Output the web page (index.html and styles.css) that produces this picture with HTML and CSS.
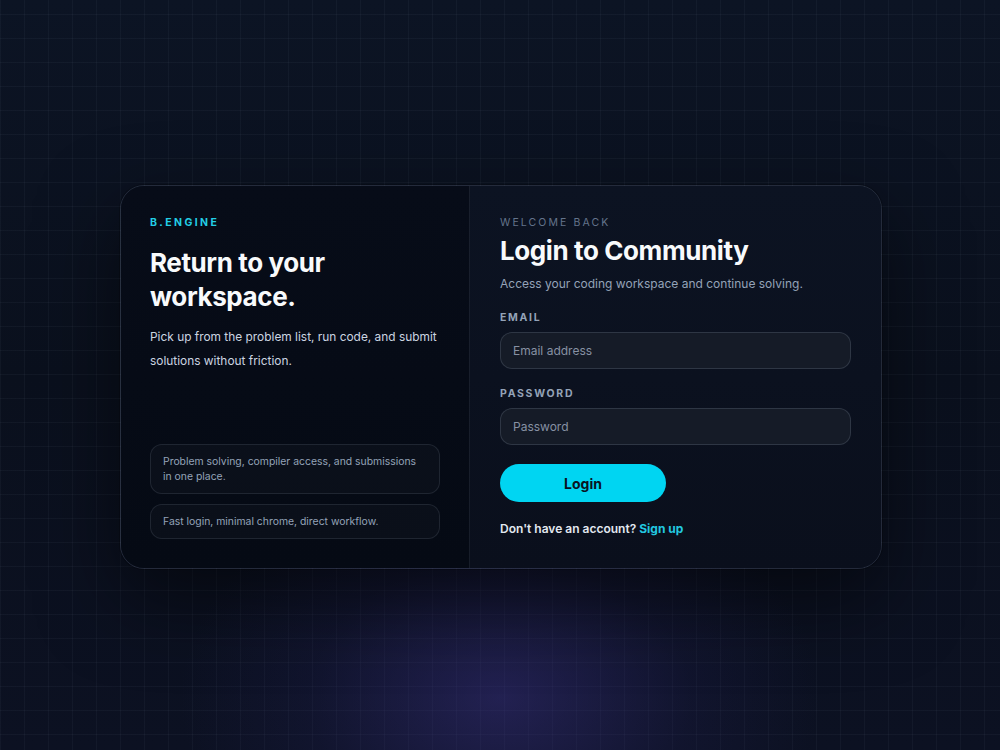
FILE: index.html
```html
<!DOCTYPE html>
<html lang="en">
<head>
<meta charset="utf-8">
<title>Login to Community · B.ENGINE</title>
<link rel="stylesheet" href="styles.css">
</head>
<body>
<main class="auth-card">
  <section class="intro">
    <div class="brand">B.ENGINE</div>
    <h1 class="intro-title">Return to your workspace.</h1>
    <p class="intro-text">Pick up from the problem list, run code, and submit solutions without friction.</p>
    <ul class="features">
      <li class="feature">Problem solving, compiler access, and submissions in one place.</li>
      <li class="feature">Fast login, minimal chrome, direct workflow.</li>
    </ul>
  </section>
  <section class="form-side">
    <div class="eyebrow">WELCOME BACK</div>
    <h2 class="form-title">Login to Community</h2>
    <p class="form-sub">Access your coding workspace and continue solving.</p>
    <form class="login-form">
      <label class="field-label" for="email">EMAIL</label>
      <input class="field-input" id="email" type="email" placeholder="Email address">
      <label class="field-label field-gap" for="password">PASSWORD</label>
      <input class="field-input" id="password" type="password" placeholder="Password">
      <button class="login-btn" type="button">Login</button>
    </form>
    <p class="signup">Don't have an account? <a href="#" class="signup-link">Sign up</a></p>
  </section>
</main>
</body>
</html>
```
FILE: styles.css
```css
* {
  box-sizing: border-box;
}

html, body {
  margin: 0;
  height: 100%;
}

body {
  padding: 4px 0 0 2px;
  font-family: Inter, "Noto Sans", sans-serif;
  color: #f1f5f9;
  background-color: #0a111f;
  background-image:
    radial-gradient(ellipse 320px 230px at 50% 93%, rgba(62, 52, 140, 0.45), rgba(40, 36, 100, 0.18) 60%, transparent 100%),
    linear-gradient(rgba(148, 163, 184, 0.055) 1px, transparent 1px),
    linear-gradient(90deg, rgba(148, 163, 184, 0.055) 1px, transparent 1px),
    linear-gradient(180deg, #0c1424 0%, #0a101d 50%, #0c1122 100%);
  background-size: 100% 100%, 24px 24px, 24px 24px, 100% 100%;
  background-position: 0 0, 0 14px, 0 0, 0 0;
  display: flex;
  align-items: center;
  justify-content: center;
}

.auth-card {
  width: 762px;
  height: 384px;
  display: grid;
  grid-template-columns: 349px 1fr;
  border: 1px solid rgba(148, 163, 184, 0.18);
  border-radius: 24px;
  overflow: hidden;
  box-shadow: 0 30px 80px rgba(0, 0, 0, 0.5), 0 0 0 1px rgba(0, 0, 0, 0.2);
}

/* left column */
.intro {
  background: linear-gradient(180deg, #070c18 0%, #050a14 100%);
  border-right: 1px solid rgba(148, 163, 184, 0.13);
  padding: 30px 29px 29px 29px;
  display: flex;
  flex-direction: column;
}

.brand {
  font-size: 10.5px;
  line-height: 14px;
  font-weight: 700;
  letter-spacing: 2.4px;
  color: #22cfe6;
}

.intro-title {
  margin: 16px 0 0;
  font-size: 26px;
  line-height: 34px;
  font-weight: 700;
  letter-spacing: -0.4px;
  color: #f8fafc;
}

.intro-text {
  margin: 11px 0 0;
  font-size: 11.9px;
  line-height: 24px;
  color: #cbd5e1;
}

.features {
  list-style: none;
  margin: auto 0 0;
  padding: 0;
  display: flex;
  flex-direction: column;
  gap: 10px;
}

.feature {
  padding: 9px 18px 9px 12px;
  font-size: 10.4px;
  line-height: 15px;
  color: #94a3b8;
  border: 1px solid rgba(148, 163, 184, 0.15);
  border-radius: 12px;
  background: rgba(255, 255, 255, 0.025);
}

/* right column */
.form-side {
  background: linear-gradient(180deg, #0c1322 0%, #0a0f1c 100%);
  padding: 30px 30px 29px 30px;
  display: flex;
  flex-direction: column;
}

.eyebrow {
  font-size: 10.5px;
  line-height: 14px;
  letter-spacing: 2.1px;
  color: #64748b;
}

.form-title {
  margin: 4px 0 0;
  font-size: 26px;
  line-height: 34px;
  font-weight: 700;
  letter-spacing: -0.4px;
  color: #f8fafc;
}

.form-sub {
  margin: 6px 0 0;
  font-size: 12px;
  line-height: 20px;
  color: #94a3b8;
}

.login-form {
  margin-top: 17px;
  display: flex;
  flex-direction: column;
  align-items: stretch;
}

.field-label {
  font-size: 10.5px;
  line-height: 14px;
  font-weight: 700;
  letter-spacing: 1.7px;
  color: #94a3b8;
}

.field-gap {
  margin-top: 18px;
}

.field-input {
  margin-top: 7px;
  height: 37px;
  padding: 0 12px;
  font-family: inherit;
  font-size: 12px;
  color: #e2e8f0;
  background: #151b27;
  border: 1px solid rgba(148, 163, 184, 0.2);
  border-radius: 12px;
  outline: none;
}

.field-input::placeholder {
  color: #8791a3;
}

.login-btn {
  align-self: flex-start;
  margin-top: 19px;
  width: 166px;
  height: 38px;
  border: 0;
  border-radius: 19px;
  background: #00d5f2;
  font-family: inherit;
  font-size: 14px;
  font-weight: 700;
  color: #0a1322;
  cursor: pointer;
}

.signup {
  margin: 17px 0 0;
  font-size: 12px;
  line-height: 20px;
  font-weight: 600;
  color: #e2e8f0;
}

.signup-link {
  color: #22c8e0;
  font-weight: 700;
  text-decoration: none;
}
```
